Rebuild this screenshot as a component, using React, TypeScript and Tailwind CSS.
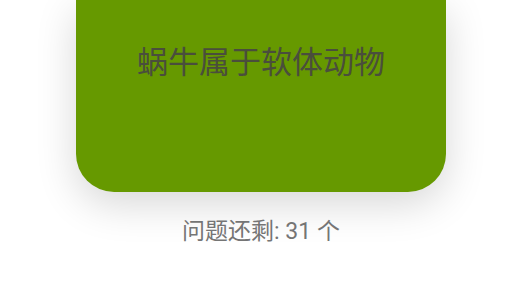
export default function App() {
  return (
    <div
      className="w-[525px] h-[286px] bg-white overflow-hidden flex flex-col items-start"
      style={{ fontFamily: 'Roboto, "Noto Sans CJK SC", sans-serif' }}
    >
      <div className="ml-[76px] w-[370px] flex flex-col items-center">
        {/* Question card */}
        <div className="w-[370px] h-[192px] shrink-0 bg-[#669900] rounded-b-[38px] shadow-[0_12px_40px_rgba(0,0,0,0.16)] flex justify-center pt-[46px]">
          <div className="text-[31px] leading-[34px] text-[#4a4e3c]">蜗牛属于软体动物</div>
        </div>

        {/* Remaining counter */}
        <div className="mt-[25px] text-[23px] leading-[30px] text-[#757575]">问题还剩: 31 个</div>
      </div>
    </div>
  )
}
